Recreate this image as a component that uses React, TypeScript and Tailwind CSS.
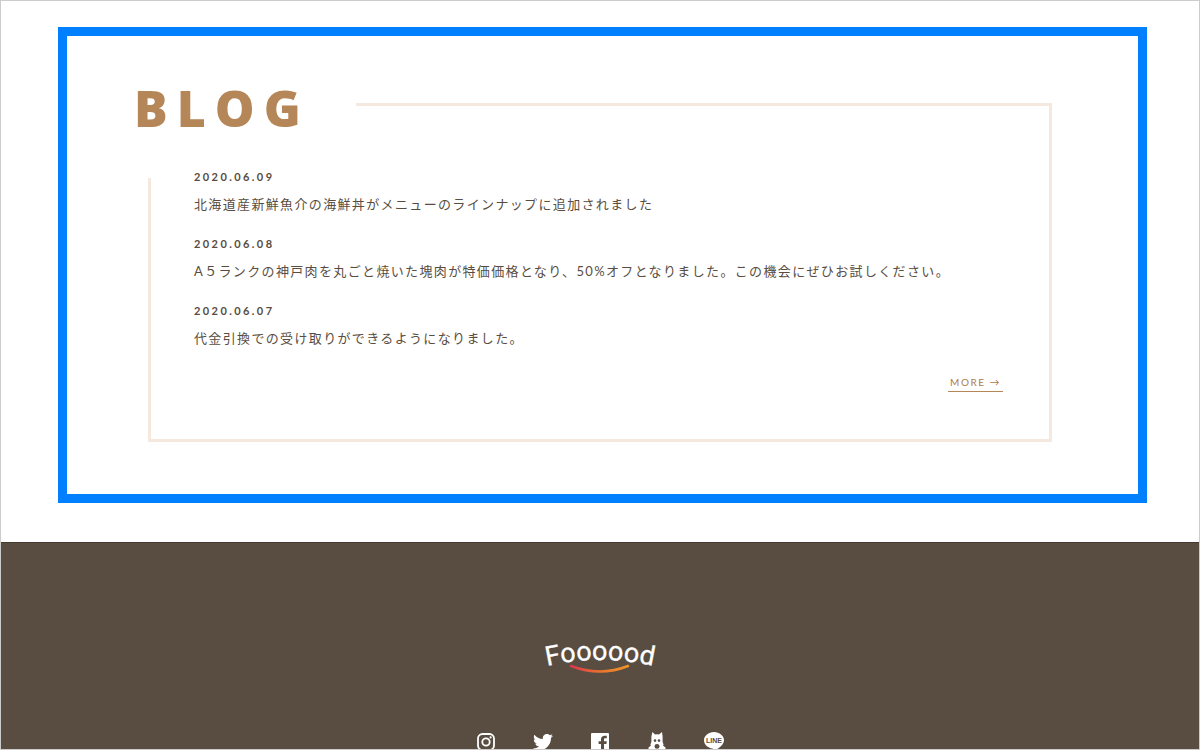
import type { ReactNode } from "react";
import { FaTwitter } from "react-icons/fa";

const posts = [
  { date: "2020.06.09", title: "北海道産新鮮魚介の海鮮丼がメニューのラインナップに追加されました" },
  {
    date: "2020.06.08",
    title: "A５ランクの神戸肉を丸ごと焼いた塊肉が特価価格となり、50%オフとなりました。この機会にぜひお試しください。",
  },
  { date: "2020.06.07", title: "代金引換での受け取りができるようになりました。" },
];

function Logo() {
  return (
    <svg viewBox="0 0 140 60" className="h-[60px] w-[140px]" role="img" aria-label="Foooood">
      <defs>
        <path id="logo-arc" d="M17 38 A240 240 0 0 1 131 40" />
        <linearGradient id="smile" x1="0" x2="1">
          <stop offset="0" stopColor="#d9364f" />
          <stop offset="0.5" stopColor="#e9722c" />
          <stop offset="1" stopColor="#f0942a" />
        </linearGradient>
      </defs>
      <text fill="#fff" stroke="#fff" strokeWidth="0.3" className="font-[Roboto,sans-serif] text-[27px]">
        <textPath href="#logo-arc">Foooood</textPath>
      </text>
      <path d="M41 38 Q70 49 98 38" fill="none" stroke="url(#smile)" strokeWidth="2.6" strokeLinecap="round" />
    </svg>
  );
}

function InstagramIcon() {
  return (
    <svg viewBox="0 0 18 18" className="size-[18px]" fill="none" stroke="#fff" aria-hidden="true">
      <rect x="1" y="1" width="16" height="16" rx="4.5" strokeWidth="1.8" />
      <circle cx="9" cy="9" r="3.7" strokeWidth="1.8" />
      <circle cx="13.6" cy="4.4" r="1.1" fill="#fff" stroke="none" />
    </svg>
  );
}

function FacebookIcon() {
  return (
    <svg viewBox="0 0 18 18" className="size-[18px]" fill="#fff" aria-hidden="true">
      <path d="M1 0H17A1 1 0 0 1 18 1V17A1 1 0 0 1 17 18H13V11H15.4L15.8 8.2H13V6.5C13 5.7 13.3 5.2 14.4 5.2H15.8V2.8C15.4 2.7 14.7 2.7 13.8 2.7C11.5 2.7 10 3.9 10 6.2V8.2H7.6V11H10V18H1A1 1 0 0 1 0 17V1A1 1 0 0 1 1 0Z" />
    </svg>
  );
}

function DogIcon() {
  return (
    <svg viewBox="0 0 18 20" className="h-5 w-[18px]" aria-hidden="true">
      <path
        fill="#fff"
        d="M4.4 0L7 2.4Q9 1.9 11 2.4L14 0L14.6 4.5V10L15.6 12.5L15 13.6L17.5 15.5V20H0.5V15.5L3 13.6L2.4 12.5L3.4 10V4.5Z"
      />
      <g fill="#594d41">
        <ellipse cx="7" cy="8.6" rx="1.3" ry="1.3" />
        <ellipse cx="11" cy="8.6" rx="1.3" ry="1.3" />
        <ellipse cx="9" cy="14.4" rx="2.5" ry="2.3" />
      </g>
    </svg>
  );
}

function LineIcon() {
  return (
    <svg viewBox="0 0 20 20" className="size-5" aria-hidden="true">
      <path
        fill="#fff"
        d="M10 0C4.5 0 0 3.7 0 8.2C0 12.3 3.6 15.8 8.5 16.5C9.4 16.7 9.1 17.5 9 19.5C12 18 20 13.5 20 8.2C20 3.7 15.5 0 10 0Z"
      />
      <text x="10" y="11" textAnchor="middle" fill="#594d41" className="font-['Liberation_Sans',sans-serif] text-[7px] font-bold">
        LINE
      </text>
    </svg>
  );
}

const socials: { name: string; icon: ReactNode }[] = [
  { name: "Instagram", icon: <InstagramIcon /> },
  { name: "Twitter", icon: <FaTwitter className="size-5 text-white" /> },
  { name: "Facebook", icon: <FacebookIcon /> },
  { name: "Tabelog", icon: <DogIcon /> },
  { name: "LINE", icon: <LineIcon /> },
];

export default function App() {
  return (
    <div className="flex h-screen flex-col overflow-hidden border border-[#ccc] bg-white font-[Lato,'Noto_Sans_CJK_JP',sans-serif] text-[#594d41]">
      <main className="pt-[26px] pr-[52px] pb-[39px] pl-[57px]">
        <section className="border-9 border-[#0080ff] pt-[67px] pr-[86px] pb-[52px] pl-[81px]">
          <div className="border-3 border-[#f5e9df] pr-[46px] pb-[47px] pl-[43px]">
            <h2 className="-mt-[25px] -ml-[63px] h-[97px] w-[225px] bg-white pl-[3px] font-['Open_Sans',sans-serif] text-[50px] leading-[54px] font-extrabold tracking-[0.18em] text-[#b58657]">
              BLOG
            </h2>
            <ul className="-mt-3 flex flex-col gap-[13px]">
              {posts.map((post) => (
                <li key={post.date}>
                  <time className="block text-[11px] leading-[22px] font-bold tracking-[0.22em]">{post.date}</time>
                  <p className="text-[13px] leading-8 tracking-[0.104em]">{post.title}</p>
                </li>
              ))}
            </ul>
            <div className="mt-[19px] flex justify-end">
              <a
                href="#more"
                className="border-b border-[#b58657] px-[2px] text-[10px] leading-[18px] tracking-[0.15em] text-[#b07a48]"
              >
                MORE →
              </a>
            </div>
          </div>
        </section>
      </main>
      <footer className="flex flex-1 flex-col items-center border-t border-[#453a30] bg-[#594d41] pt-[85px]">
        <Logo />
        <nav aria-label="Social" className="mt-11 flex items-start">
          {socials.map((social) => (
            <a key={social.name} href="#social" aria-label={social.name} className="flex h-5 w-[57px] items-center justify-center">
              {social.icon}
            </a>
          ))}
        </nav>
      </footer>
    </div>
  );
}
